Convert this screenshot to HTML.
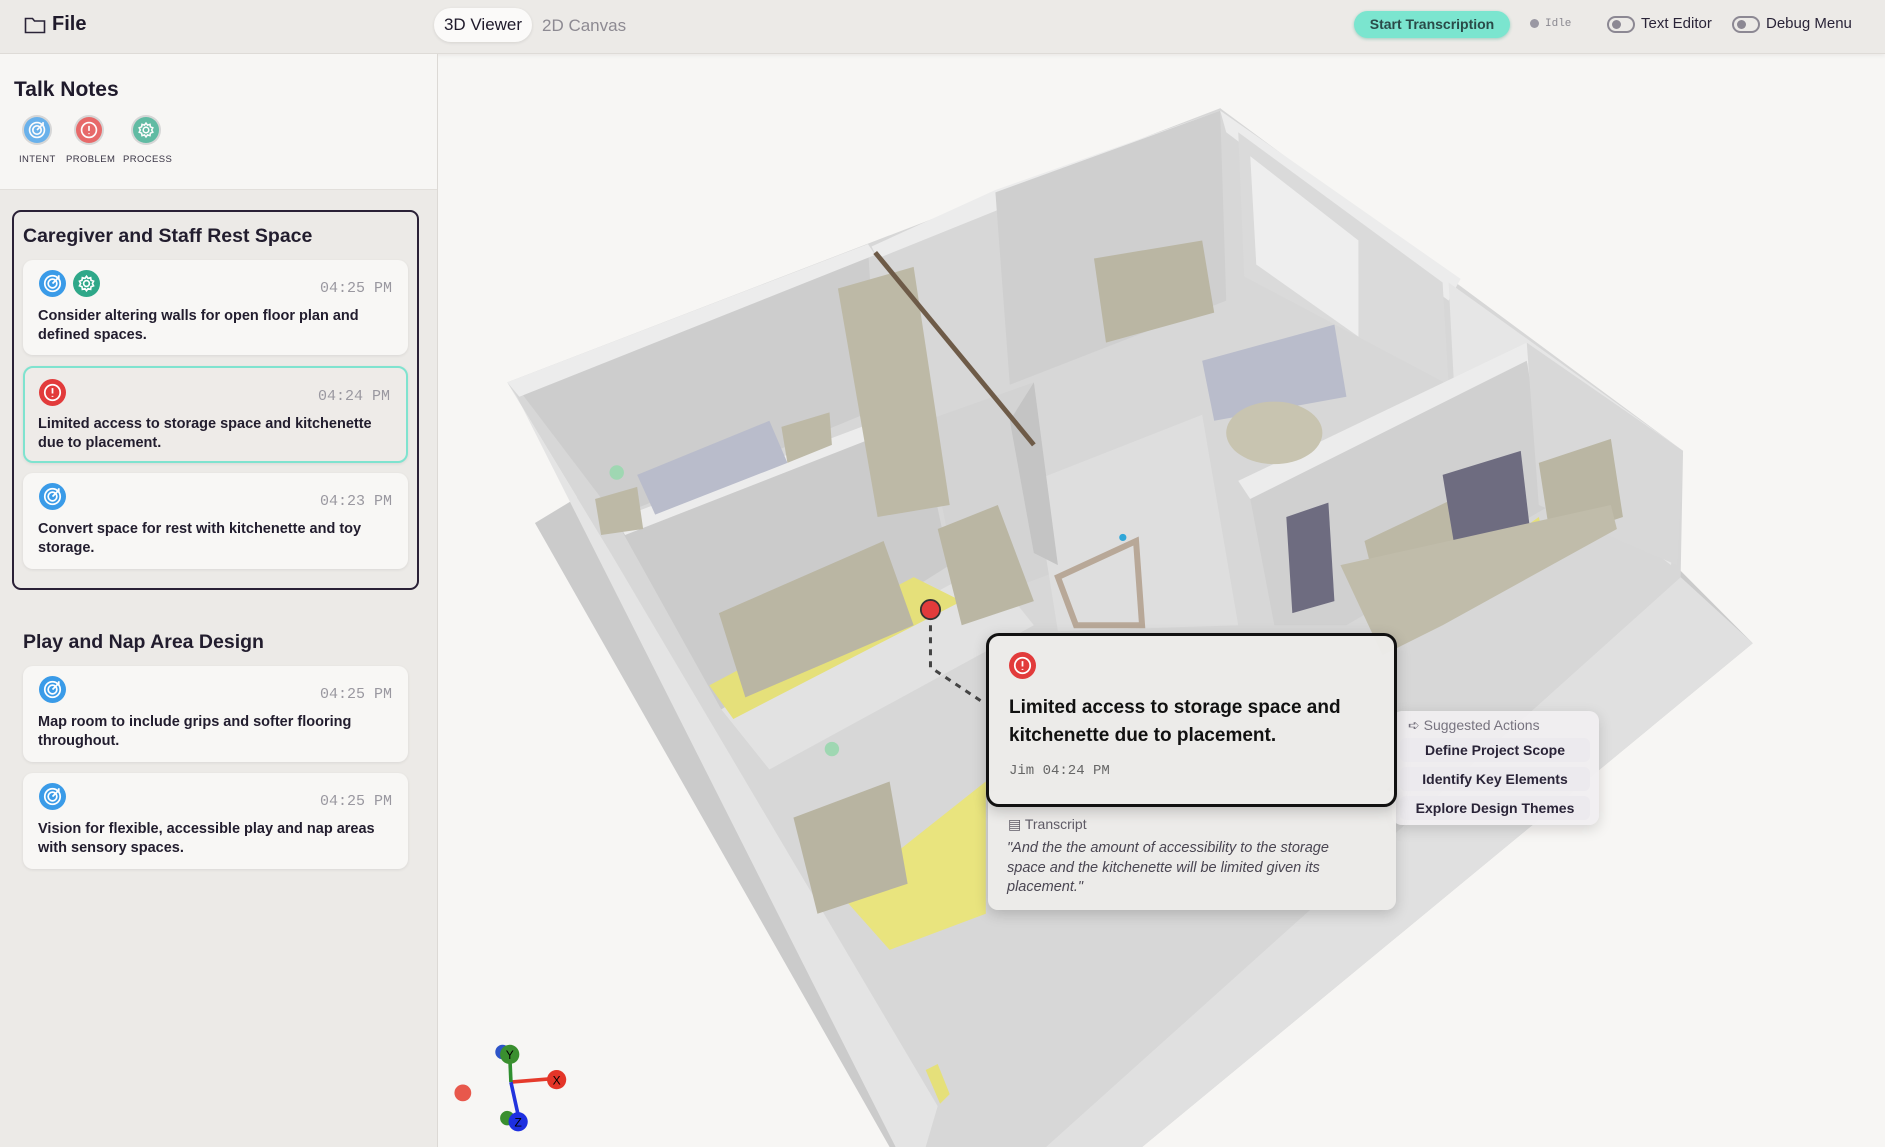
<!DOCTYPE html>
<html><head><meta charset="utf-8"><style>
*{box-sizing:border-box;margin:0;padding:0}
body{width:1885px;height:1147px;overflow:hidden;background:#f7f6f4;font-family:"Liberation Sans",sans-serif;color:#1f1a2b;position:relative}
.abs{position:absolute}
#scene{position:absolute;left:0;top:0}
.top{left:0;top:0;width:1885px;height:54px;background:#eceae7;border-bottom:1px solid #dedbd7;box-shadow:0 2px 4px rgba(0,0,0,.05)}
.side{left:0;top:54px;width:438px;height:1093px;background:#eceae7;border-right:1px solid #dcd9d5}
.sidetop{left:0;top:54px;width:437px;height:136px;background:#f7f6f4;border-bottom:1px solid #e2dfdb}
.card{position:absolute;left:23px;width:385px;background:#f8f7f5;border-radius:10px;box-shadow:0 1px 3px rgba(0,0,0,.08)}
.card .t{position:absolute;right:16px;top:20px;font-family:"Liberation Mono",monospace;font-size:15px;color:#9a98a0}
.card p{position:absolute;left:15px;top:47px;width:355px;font-size:14.5px;font-weight:bold;line-height:19px;color:#221d2e}
.ic{position:absolute;width:27px;height:27px;border-radius:50%}
.ic svg{position:absolute;left:0;top:0;width:100%;height:100%}
.blue{background:#3a9be8}.red{background:#e23b3b}.grn{background:#2fa889}
.gt{font-size:19.5px;font-weight:bold;color:#221d2e}
.tog{position:absolute;width:28px;height:17px;border:2px solid #8c8893;border-radius:9px}
.tog:after{content:"";position:absolute;left:3px;top:2px;width:9px;height:9px;border-radius:50%;background:#8c8893}
.sa{position:absolute;left:8px;width:190px;height:24px;background:#eceaee;border-radius:6px;font-size:14px;font-weight:bold;text-align:center;line-height:24px;color:#2a2438}
</style></head><body>
<svg width="0" height="0" style="position:absolute"><defs>
<g id="tgt" fill="none" stroke="#fff" stroke-width="1.8"><circle cx="14" cy="14" r="8"/><circle cx="14" cy="14" r="4.5"/><path d="M14 14l6-6M18 8h2.5v-2.5"/></g>
<g id="gear" fill="none" stroke="#fff" stroke-width="1.7"><circle cx="14" cy="14" r="3"/><path d="M14 6.5l1.6 2.2 2.7-.8.4 2.7 2.6 1-1.2 2.4 1.2 2.4-2.6 1-.4 2.7-2.7-.8-1.6 2.2-1.6-2.2-2.7.8-.4-2.7-2.6-1 1.2-2.4-1.2-2.4 2.6-1 .4-2.7 2.7.8z"/></g>
<g id="exc" fill="none" stroke="#fff" stroke-width="1.8"><circle cx="14" cy="14" r="8"/><path d="M14 9.5v5.5M14 17.5v1"/></g>
</defs></svg>
<svg id="scene" width="1885" height="1147" viewBox="0 0 1568 954" preserveAspectRatio="none">
<polygon points="445,435 1015,90 1458,535 950,954 740,954" fill="#cbcbcb"/>
<polygon points="422,318 1015,90 1400,375 1398,480 870,954 770,954 505,455" fill="#d7d7d7"/>
<polygon points="1458,535 1398,480 870,954 950,954" fill="#e0e0e0"/>
<polygon points="422,318 505,455 780,920 770,954 745,954 430,330" fill="#e4e4e4"/>
<polygon points="430,322 722,205 730,340 512,430" fill="#cdcdcd"/>
<polygon points="422,318 722,203 728,212 432,330" fill="#ececec"/>
<polygon points="725,205 828,158 1015,92 1015,100 730,215" fill="#ececec"/>
<polygon points="828,160 1015,92 1020,250 840,320" fill="#cfcfcf"/>
<polygon points="1015,92 1215,232 1205,250 1020,110" fill="#ececec"/>
<polygon points="1030,110 1200,235 1205,320 1035,230" fill="#dadada"/>
<polygon points="1040,130 1130,200 1130,280 1045,220" fill="#eeeeee"/>
<polygon points="1205,235 1400,375 1390,470 1210,330" fill="#e6e6e6"/>
<polygon points="512,432 762,338 790,470 600,590" fill="#cbcbcb"/>
<polygon points="512,432 762,338 768,348 520,445" fill="#ececec"/>
<polygon points="770,350 860,318 880,475 800,505" fill="#d3d3d3"/>
<polygon points="860,400 1000,345 1030,520 880,525" fill="#dedede"/>
<polygon points="840,350 860,318 880,470 860,460" fill="#c4c4c4"/>
<polygon points="1030,400 1270,285 1275,300 1040,415" fill="#ececec"/>
<polygon points="1040,415 1270,300 1290,420 1120,520 1060,520" fill="#d0d0d0"/>
<polygon points="1270,285 1400,375 1395,470 1280,420" fill="#d8d8d8"/>
<polygon points="600,590 820,470 860,520 640,640" fill="#e2e2e2"/>
<polygon points="590,570 760,480 800,500 610,598" fill="#e5e07a"/>
<polygon points="700,745 820,650 820,760 740,790" fill="#e9e47e"/>
<polygon points="1190,495 1280,430 1285,450 1195,505" fill="#e5e07a"/>
<polygon points="598,510 735,450 760,520 620,580" fill="#bab6a3"/>
<polygon points="660,680 740,650 755,735 680,760" fill="#b8b4a1"/>
<polygon points="697,240 760,222 790,420 730,430" fill="#bdb9a6"/>
<polygon points="780,440 830,420 860,500 800,520" fill="#bab6a3"/>
<polygon points="1135,450 1230,405 1245,455 1150,510" fill="#bcb8a5"/>
<polygon points="1200,395 1265,375 1275,460 1215,485" fill="#6e6c80"/>
<polygon points="1070,430 1105,418 1110,500 1075,510" fill="#6e6c80"/>
<polygon points="1280,385 1340,365 1350,430 1290,450" fill="#bab6a3"/>
<polygon points="1115,470 1340,420 1345,440 1200,520 1150,545" fill="#c0bcaa"/>
<polygon points="910,215 1000,200 1010,260 920,285" fill="#bab6a3"/>
<polygon points="530,395 640,350 655,385 545,428" fill="#b9bccb"/>
<polygon points="650,355 690,343 692,370 655,385" fill="#bdb9a6"/>
<polygon points="495,415 530,405 535,440 500,445" fill="#bdb9a6"/>
<polygon points="1000,300 1110,270 1120,330 1010,350" fill="#b9bccb"/>
<ellipse cx="1060" cy="360" rx="40" ry="26" fill="#c8c4b0"/>
<polygon points="880,480 945,450 950,520 895,520" fill="none" stroke="#b8a898" stroke-width="5"/>
<line x1="728" y1="210" x2="860" y2="370" stroke="#6e5b48" stroke-width="4"/>
<circle cx="513" cy="393" r="6" fill="#9fd7b2"/>
<circle cx="692" cy="623" r="6" fill="#9fd7b2"/>
<circle cx="934" cy="447" r="3" fill="#30a6d8"/>
<polyline points="774,510 774,555 816,583" fill="none" stroke="#444" stroke-width="2.5" stroke-dasharray="5,5"/>
<circle cx="774" cy="507" r="8" fill="#e23b3b" stroke="#333" stroke-width="1.5"/>
<polygon points="770,890 780,885 790,910 782,918" fill="#e5e07a"/>
<circle cx="385" cy="909" r="7" fill="#e8584c"/>
<line x1="425" y1="900" x2="462" y2="897" stroke="#e53a2b" stroke-width="3"/>
<line x1="425" y1="900" x2="424" y2="877" stroke="#2f8f2f" stroke-width="3"/>
<line x1="425" y1="900" x2="432" y2="932" stroke="#2233dd" stroke-width="3"/>
<circle cx="418" cy="875" r="6" fill="#2d54c8"/>
<circle cx="424" cy="877" r="8" fill="#3a8f2f"/><text x="424" y="881" font-size="10" text-anchor="middle" font-family="Liberation Sans">Y</text>
<circle cx="463" cy="898" r="8" fill="#e43528"/><text x="463" y="902" font-size="10" text-anchor="middle" font-family="Liberation Sans">X</text>
<circle cx="422" cy="930" r="6" fill="#3a8f2f"/>
<circle cx="431" cy="933" r="8" fill="#1d2fe0"/><text x="431" y="937" font-size="10" text-anchor="middle" font-family="Liberation Sans">Z</text>
</svg>

<div class="abs top"></div>
<svg class="abs" style="left:24px;top:16px" width="22" height="18" viewBox="0 0 22 18"><path d="M1.5 2.5h7l2 2.5h10v11.5h-19z" fill="none" stroke="#2a2438" stroke-width="1.6"/></svg>
<div class="abs" style="left:52px;top:13px;font-size:20px;font-weight:bold">File</div>
<div class="abs" style="left:434px;top:8px;width:98px;height:34px;background:#fbfaf9;border-radius:17px;box-shadow:0 1px 3px rgba(0,0,0,.1);font-size:17px;line-height:34px;text-align:center">3D Viewer</div>
<div class="abs" style="left:542px;top:16px;font-size:17px;color:#8d8a92">2D Canvas</div>
<div class="abs" style="left:1354px;top:11px;width:156px;height:27px;background:#7be5cf;border-radius:14px;box-shadow:0 1px 3px rgba(40,160,130,.4);font-size:14px;font-weight:bold;color:#2a4a48;text-align:center;line-height:27px">Start Transcription</div>
<div class="abs" style="left:1530px;top:19px;width:9px;height:9px;border-radius:50%;background:#9a98a3"></div>
<div class="abs" style="left:1545px;top:18px;font-family:'Liberation Mono',monospace;font-size:11px;color:#8a8890">Idle</div>
<div class="tog" style="left:1607px;top:16px"></div>
<div class="abs" style="left:1641px;top:15px;font-size:15px;color:#2a2438">Text Editor</div>
<div class="tog" style="left:1732px;top:16px"></div>
<div class="abs" style="left:1766px;top:15px;font-size:15px;color:#2a2438">Debug Menu</div>

<div class="abs side"></div>
<div class="abs sidetop"></div>
<div class="abs" style="left:14px;top:78px;font-size:21px;font-weight:bold">Talk Notes</div>
<div class="ic blue abs" style="left:24px;top:117px;width:26px;height:26px;opacity:.75;box-shadow:0 0 0 2px #ccc"><svg viewBox="0 0 28 28"><use href="#tgt"/></svg></div>
<div class="ic red abs" style="left:76px;top:117px;width:26px;height:26px;opacity:.75;box-shadow:0 0 0 2px #ccc"><svg viewBox="0 0 28 28"><use href="#exc"/></svg></div>
<div class="ic grn abs" style="left:133px;top:117px;width:26px;height:26px;opacity:.75;box-shadow:0 0 0 2px #ccc"><svg viewBox="0 0 28 28"><use href="#gear"/></svg></div>
<div class="abs" style="left:19px;top:154px;font-size:9.5px;letter-spacing:.4px;color:#3a3545">INTENT</div>
<div class="abs" style="left:66px;top:154px;font-size:9.5px;letter-spacing:.4px;color:#3a3545">PROBLEM</div>
<div class="abs" style="left:123px;top:154px;font-size:9.5px;letter-spacing:.4px;color:#3a3545">PROCESS</div>

<div class="abs" style="left:12px;top:210px;width:407px;height:380px;border:2.5px solid #2a2036;border-radius:9px"></div>
<div class="abs gt" style="left:23px;top:225px">Caregiver and Staff Rest Space</div>
<div class="card" style="top:260px;height:95px"><div class="ic blue" style="left:16px;top:10px"><svg viewBox="0 0 28 28"><use href="#tgt"/></svg></div><div class="ic grn" style="left:50px;top:10px"><svg viewBox="0 0 28 28"><use href="#gear"/></svg></div><div class="t">04:25 PM</div><p>Consider altering walls for open floor plan and defined spaces.</p></div>
<div class="card" style="top:366px;height:97px;background:#eeebe8;border:2.5px solid #7fe3cf"><div class="ic red" style="left:14px;top:11px"><svg viewBox="0 0 28 28"><use href="#exc"/></svg></div><div class="t">04:24 PM</div><p style="left:13px">Limited access to storage space and kitchenette due to placement.</p></div>
<div class="card" style="top:473px;height:96px"><div class="ic blue" style="left:16px;top:10px"><svg viewBox="0 0 28 28"><use href="#tgt"/></svg></div><div class="t">04:23 PM</div><p>Convert space for rest with kitchenette and toy storage.</p></div>

<div class="abs gt" style="left:23px;top:631px">Play and Nap Area Design</div>
<div class="card" style="top:666px;height:96px"><div class="ic blue" style="left:16px;top:10px"><svg viewBox="0 0 28 28"><use href="#tgt"/></svg></div><div class="t">04:25 PM</div><p>Map room to include grips and softer flooring throughout.</p></div>
<div class="card" style="top:773px;height:96px"><div class="ic blue" style="left:16px;top:10px"><svg viewBox="0 0 28 28"><use href="#tgt"/></svg></div><div class="t">04:25 PM</div><p>Vision for flexible, accessible play and nap areas with sensory spaces.</p></div>

<div class="abs" style="left:1392px;top:711px;width:207px;height:114px;background:rgba(240,238,240,.95);border-radius:10px;box-shadow:0 4px 14px rgba(0,0,0,.15)">
<div class="abs" style="left:16px;top:6px;font-size:14px;color:#77737f">➪ Suggested Actions</div>
<div class="sa" style="top:27px">Define Project Scope</div>
<div class="sa" style="top:56px">Identify Key Elements</div>
<div class="sa" style="top:85px">Explore Design Themes</div>
</div>
<div class="abs" style="left:988px;top:790px;width:408px;height:120px;background:rgba(236,235,233,.96);border-radius:10px;box-shadow:0 4px 14px rgba(0,0,0,.18)">
<div class="abs" style="left:20px;top:26px;font-size:14px;color:#5f5b66">▤ Transcript</div>
<div class="abs" style="left:19px;top:49px;width:345px;font-size:14.5px;font-style:italic;line-height:19.5px;color:#4a4652">"And the the amount of accessibility to the storage space and the kitchenette will be limited given its placement."</div>
</div>
<div class="abs" style="left:986px;top:633px;width:411px;height:174px;background:rgba(236,235,233,.97);border:3px solid #111;border-radius:13px;box-shadow:0 4px 14px rgba(0,0,0,.2)">
<div class="abs red" style="left:20px;top:16px;width:27px;height:27px;border-radius:50%"><svg viewBox="0 0 28 28" style="width:27px;height:27px"><use href="#exc"/></svg></div>
<div class="abs" style="left:20px;top:58px;width:360px;font-size:19px;font-weight:bold;line-height:28px;color:#111">Limited access to storage space and kitchenette due to placement.</div>
<div class="abs" style="left:20px;top:127px;font-family:'Liberation Mono',monospace;font-size:14px;color:#666">Jim 04:24 PM</div>
</div>
</body></html>
